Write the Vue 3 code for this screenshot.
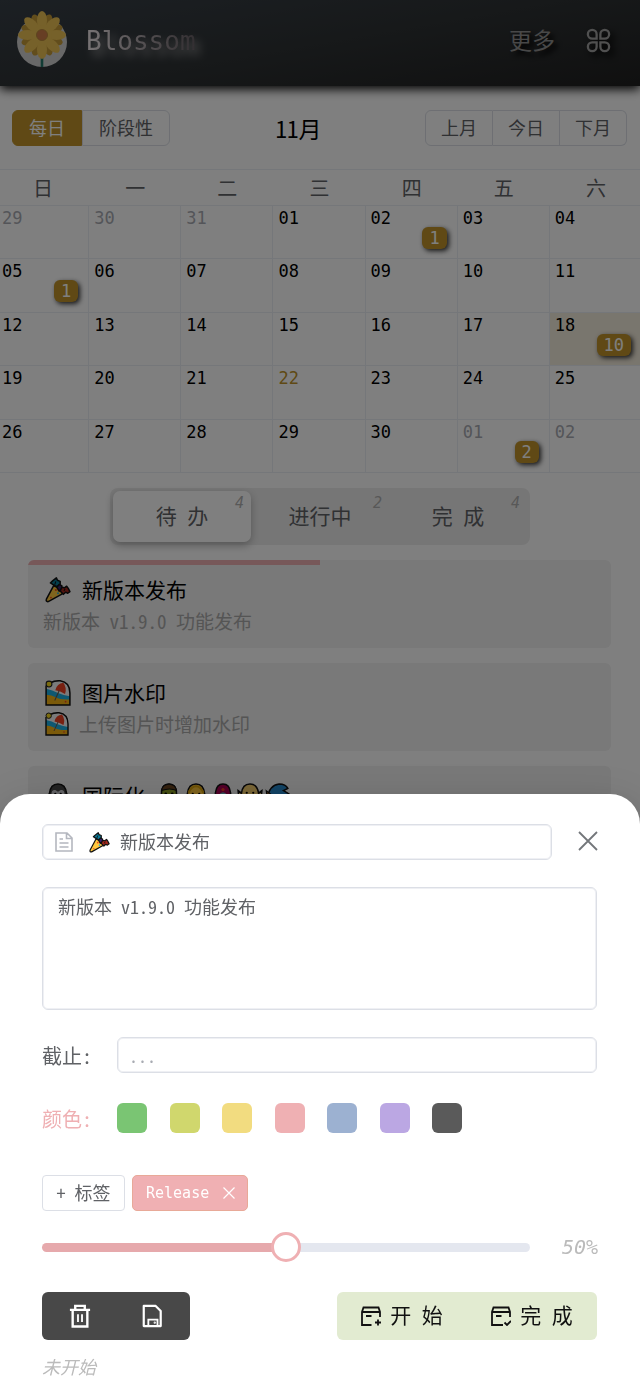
<script setup>
import { ref } from 'vue'

const mode = ref('daily')
const tab = ref('todo')
const title = ref('新版本发布')
const content = ref('新版本 v1.9.0 功能发布')
const deadline = ref('')
const progress = ref(50)

const weekdays = ['日', '一', '二', '三', '四', '五', '六']
const weeks = [
  [{ d: '29', out: true }, { d: '30', out: true }, { d: '31', out: true }, { d: '01' }, { d: '02', n: 1 }, { d: '03' }, { d: '04' }],
  [{ d: '05', n: 1 }, { d: '06' }, { d: '07' }, { d: '08' }, { d: '09' }, { d: '10' }, { d: '11' }],
  [{ d: '12' }, { d: '13' }, { d: '14' }, { d: '15' }, { d: '16' }, { d: '17' }, { d: '18', n: 10, selected: true }],
  [{ d: '19' }, { d: '20' }, { d: '21' }, { d: '22', today: true }, { d: '23' }, { d: '24' }, { d: '25' }],
  [{ d: '26' }, { d: '27' }, { d: '28' }, { d: '29' }, { d: '30' }, { d: '01', n: 2, out: true }, { d: '02', out: true }]
]
const tabs = [
  { id: 'todo', label: '待 办', count: 4 },
  { id: 'doing', label: '进行中', count: 2 },
  { id: 'done', label: '完 成', count: 4 }
]
const colors = [
  { name: '绿色', c: 'green' },
  { name: '黄绿', c: 'lime' },
  { name: '黄色', c: 'yellow' },
  { name: '粉色', c: 'pink' },
  { name: '蓝色', c: 'blue' },
  { name: '紫色', c: 'purple' },
  { name: '黑色', c: 'black' }
]
const petals = [0, 45, 90, 135, 180, 225, 270, 315]
</script>

<template>
  <svg class="defs" aria-hidden="true">
    <symbol id="party" viewBox="0 0 24 24">
      <path d="M8 8 1.300 20.500q-.8 2.500 1.700 2.200L16 15.500Q14 10 8 8Z" fill="#ffc83d" stroke="#111" stroke-width="1.400" stroke-linejoin="round" />
      <path d="M7.500 7 5 5.500 7 3.600 10.500.8 11.500 3l2.500 1v3L11 9Z" fill="#087a98" stroke="#111" stroke-width="1.400" stroke-linejoin="round" />
      <path d="M11 9.500 13 7l2.500 1v3L13 13Z" fill="#3a2370" stroke="#111" stroke-width="1.400" stroke-linejoin="round" />
      <path d="m14 13 1.500-3.500L18 10l2-1.500 1.500 2 1.500 3-2 1.500-2-1-2 2Z" fill="#a3271c" stroke="#111" stroke-width="1.400" stroke-linejoin="round" />
      <path d="m9 7 1-3M17.500 13l1-2" stroke="#111" />
      <circle cx="10" cy="12" r="1" fill="#ef4023" /><circle cx="12" cy="15" r=".9" fill="#28a9dd" /><circle cx="5.500" cy="19" r=".8" fill="#ef4023" />
    </symbol>
    <symbol id="beach" viewBox="0 0 24 24">
      <path d="M1 2h14q8 1 8 10v11H1Z" fill="#f5f7f8" />
      <path d="M1 8q6 1 11 4 5 2 11 3v5H1Z" fill="#1cb0e4" />
      <path d="M1 13.500q5 0 9 2.500t13 2v5H1Z" fill="#f7b515" />
      <path d="M9.500 9.500Q11 3 17 2.500q3.500 5 1.500 10.500Q14 10 9.500 9.500Z" fill="#ef4023" />
      <path d="m13 10-4 9" stroke="#665c50" stroke-width="1" />
      <path d="M1 5v18h22V12q0-10-9-11.300Q9 .5 5 2.500" fill="none" stroke="#111" stroke-width="1.400" />
      <circle cx="3.700" cy="3.700" r="2.700" fill="#f7d91f" stroke="#222" /><circle cx="19" cy="20" r=".8" fill="#ef4023" />
    </symbol>
    <symbol id="gorilla" viewBox="0 0 24 24">
      <path d="M4 10Q5 1 12 1t8 9l3 3v11H1V13Z" fill="#454545" stroke="#111" stroke-width="1.400" />
      <path d="M6 10q0-4 3.500-3.500L12 8l2.500-1.500Q18 6 18 10v8H6Z" fill="#c9c9cf" />
      <circle cx="9.500" cy="10" r="1" /><circle cx="14.500" cy="10" r="1" />
    </symbol>
    <symbol id="zombie" viewBox="0 0 24 24">
      <path d="M5 10Q5 1 12 1t7 9v6q-2 6-7 6t-7-6Z" fill="#8a9d24" stroke="#111" stroke-width="1.400" />
      <path d="M5 7Q6 1 12 1t7 6q-6-3-14 0Z" fill="#68431e" stroke="#111" /><circle cx="9" cy="10" r="1.200" /><circle cx="15" cy="10" r="1.200" />
    </symbol>
    <symbol id="person" viewBox="0 0 24 24">
      <path d="M4 10Q5 1 12 1t8 9v6q-3 6-8 6t-8-6Z" fill="#ffc83d" stroke="#111" stroke-width="1.400" />
      <path d="M5 9q3-6 7-6t7 6" fill="none" stroke="#dba40c" stroke-width="2" /><circle cx="9" cy="10" r="1" /><circle cx="15" cy="10" r="1" />
    </symbol>
    <symbol id="mage" viewBox="0 0 24 24">
      <path d="M5 22V9q1-8 7-8t7 8v13Z" fill="#a90052" stroke="#111" stroke-width="1.400" />
      <path d="M8 16v-5q4-5 8 0v5Z" fill="#6bb0bb" /><circle cx="12" cy="6" r="1.500" fill="#ef4023" />
    </symbol>
    <symbol id="elf" viewBox="0 0 24 24">
      <path d="M5 10 1 7q0 7 5 8m13-5 4-3q0 7-5 8" fill="#f3cf75" stroke="#111" stroke-width="1.400" />
      <path d="M4 10Q5 1 12 1t8 9q0 12-8 12T4 10Z" fill="#f5ce6e" stroke="#111" stroke-width="1.400" /><circle cx="9" cy="9" r="1" /><circle cx="15" cy="9" r="1" />
    </symbol>
    <symbol id="genie" viewBox="0 0 24 24">
      <path d="M3 14Q5 2 14 1q6 0 8 4l-4 2 5 3q0 9-9 12-8 0-11-8Z" fill="#2587c9" stroke="#111" stroke-width="1.400" />
      <path d="m2 7 4 3-3 4Z" fill="#774b23" stroke="#111" />
    </symbol>
  </svg>

  <div class="page">
    <header class="top">
      <svg class="logo" viewBox="0 0 50 58" aria-hidden="true">
        <circle cx="25" cy="31" r="25" fill="#d0d0d0" />
        <path d="M25 40v16" stroke="#24786a" stroke-width="2.600" />
        <g transform="translate(25 24)">
          <ellipse v-for="a in petals" :key="'b' + a" cx="0" cy="-14" rx="4.500" ry="8" fill="#c49a38" :transform="`rotate(${a + 22})`" />
          <ellipse v-for="a in petals" :key="a" cx="0" cy="-14.500" rx="5" ry="9.500" fill="#edc254" :transform="`rotate(${a})`" />
          <circle r="10" fill="#edc254" /><circle r="5.500" fill="#cf7c48" stroke="#b98a3c" />
        </g>
      </svg>
      <span class="brand">Blossom</span>
      <a class="more" href="#more">更多</a>
      <button class="apps" type="button" aria-label="菜单">
        <svg viewBox="0 0 24 24" fill="none" stroke="currentColor" stroke-width="2.200">
          <path d="M10.200 10.200H6A4.200 4.200 0 1 1 10.200 6ZM13.800 10.200V6A4.200 4.200 0 1 1 18 10.200ZM10.200 13.800V18A4.200 4.200 0 1 1 6 13.800ZM13.800 13.800H18A4.200 4.200 0 1 1 13.800 18Z" />
        </svg>
      </button>
    </header>

    <div class="toolbar">
      <div class="segment">
        <label :class="{ on: mode === 'daily' }"><input v-model="mode" type="radio" name="mode" value="daily" />每日</label>
        <label :class="{ on: mode === 'phase' }"><input v-model="mode" type="radio" name="mode" value="phase" />阶段性</label>
      </div>
      <h1>11月</h1>
      <div class="nav">
        <button type="button">上月</button><button type="button">今日</button><button type="button">下月</button>
      </div>
    </div>

    <div class="calendar">
      <table>
        <thead>
          <tr><th v-for="w in weekdays" :key="w" scope="col">{{ w }}</th></tr>
        </thead>
        <tbody>
          <tr v-for="(week, i) in weeks" :key="i">
            <td v-for="c in week" :key="c.d" :class="{ out: c.out, today: c.today, selected: c.selected }">
              <div class="day">{{ c.d }}<span v-if="c.n" class="badge">{{ c.n }}</span></div>
            </td>
          </tr>
        </tbody>
      </table>
    </div>

    <div class="tabs">
      <button v-for="t in tabs" :key="t.id" type="button" :class="{ active: tab === t.id }" @click="tab = t.id">
        {{ t.label }}<i>{{ t.count }}</i>
      </button>
    </div>

    <main class="cards">
      <article class="card">
        <div class="done"></div>
        <h2><svg class="emoji"><use href="#party" /></svg>新版本发布</h2>
        <p>新版本 v1.9.0 功能发布</p>
      </article>
      <article class="card">
        <h2><svg class="emoji"><use href="#beach" /></svg>图片水印</h2>
        <p><svg class="emoji small"><use href="#beach" /></svg>上传图片时增加水印</p>
      </article>
      <article class="card">
        <h2>
          <svg class="emoji"><use href="#gorilla" /></svg>国际化
          <span class="faces">
            <svg v-for="f in ['zombie', 'person', 'mage', 'elf', 'genie']" :key="f" class="emoji"><use :href="'#' + f" /></svg>
          </span>
        </h2>
      </article>
    </main>
  </div>

  <div class="overlay">
    <section class="sheet" role="dialog" aria-label="编辑任务">
      <div class="title-row">
        <label class="field">
          <svg class="doc" viewBox="0 0 20 20" fill="none" stroke="currentColor" stroke-width="1.600">
            <path d="M2 1h11l5 5v13H2ZM12.500 1v5.500H18M5.500 7h3.500M5.500 11h9M5.500 15h9" />
          </svg>
          <svg class="emoji mini"><use href="#party" /></svg>
          <input v-model="title" type="text" aria-label="标题" />
        </label>
        <button class="close" type="button" aria-label="关闭">
          <svg viewBox="0 0 20 20" stroke="currentColor" stroke-width="1.800"><path d="m1 1 18 18M19 1 1 19" /></svg>
        </button>
      </div>

      <textarea v-model="content" aria-label="内容"></textarea>

      <div class="form-row deadline">
        <label for="deadline">截止:</label>
        <input id="deadline" v-model="deadline" type="text" placeholder="..." />
      </div>

      <div class="form-row palette">
        <span>颜色:</span>
        <div class="swatches">
          <button v-for="c in colors" :key="c.c" type="button" :class="c.c" :aria-label="c.name"></button>
        </div>
      </div>

      <div class="tags">
        <button class="add" type="button">+ 标签</button>
        <span class="tag">Release
          <button type="button" aria-label="移除标签">
            <svg viewBox="0 0 12 12" stroke="currentColor" stroke-width="1.200"><path d="m.5.5 11 11M11.500.5l-11 11" /></svg>
          </button>
        </span>
      </div>

      <div class="progress">
        <input v-model="progress" type="range" min="0" max="100" aria-label="进度" :style="{ '--value': progress + '%' }" />
        <output>{{ progress }}%</output>
      </div>

      <div class="actions">
        <div class="group dark">
          <button type="button" aria-label="删除">
            <svg viewBox="0 0 24 26" fill="none" stroke="currentColor" stroke-width="2.600">
              <path d="M1 6.300h22M6.800 6V2h10.400v4M4 6v18.500h16V6" /><path d="M9.800 11v8.500M14.200 11v8.500" stroke-width="2" />
            </svg>
          </button>
          <button type="button" aria-label="保存">
            <svg viewBox="0 0 24 26" fill="none" stroke="currentColor" stroke-width="2.400">
              <path d="M3 2h13l5.500 5.500V24H3Z" stroke-linejoin="round" /><path d="M8 24v-7h10v7" stroke-width="2" /><circle cx="15" cy="20.300" r=".5" stroke-width="1.500" />
            </svg>
          </button>
        </div>
        <div class="group green-group">
          <button type="button">
            <svg viewBox="0 0 20 20" fill="none" stroke="currentColor" stroke-width="1.800">
              <path d="M19 11V6l-1.500-4.500h-15L1 6v13h9.500M1 6h18M5 10h5.500" /><path d="M17 13.500v6M14 16.500h6" />
            </svg><span>开 始</span>
          </button>
          <button type="button">
            <svg viewBox="0 0 20 20" fill="none" stroke="currentColor" stroke-width="1.800">
              <path d="M19 11V6l-1.500-4.500h-15L1 6v13h11M1 6h18M5 10h5.500" /><path d="m13.500 16.500 2.500 2.500 4-4" />
            </svg><span>完 成</span>
          </button>
        </div>
      </div>
      <p class="status">未开始</p>
    </section>
  </div>
</template>

<style>
body {
  margin: 0;
  background: #fff;
}
</style>

<style scoped>
.defs {
  position: absolute;
  width: 0;
  height: 0;
}
.page,
.overlay {
  --mono: "DejaVu Sans Mono", "Liberation Mono", "Noto Sans CJK SC", monospace;
  --cjk: "Noto Sans Mono CJK SC", "DejaVu Sans", "Noto Sans CJK SC", sans-serif;
  font-family: var(--cjk);
  font-weight: 300;
  color: #606266;
}
.page *,
.overlay * {
  box-sizing: border-box;
}
.page {
  height: 100vh;
  overflow: hidden;
  background: #fff;
}
button,
input,
textarea {
  font: inherit;
  color: inherit;
}
button {
  padding: 0;
  border: 0;
  background: none;
}
.emoji {
  width: 26px;
  height: 26px;
  flex: none;
}
.emoji.small {
  width: 24px;
  height: 24px;
  margin: 0 -2px 0 2px;
}
.emoji.mini {
  width: 21px;
  height: 21px;
}

.top {
  display: flex;
  align-items: center;
  height: 86px;
  padding: 0 29px 0 17px;
  background: linear-gradient(170deg, #384048 0%, #2e3234 50%, #202020 100%);
  box-shadow: 0 3px 10px #000;
}
.logo {
  width: 50px;
  height: 58px;
  margin-bottom: 6px;
}
.brand {
  margin: 0 auto 4px 19px;
  font: 26px/32px var(--mono);
  color: transparent;
  background: linear-gradient(90deg, #f0e8ea, #665e64);
  background-clip: text;
  filter: drop-shadow(5px 6px 4px #999);
}
.more {
  margin-bottom: 8px;
  font-size: 23px;
  color: #909090;
  text-decoration: none;
  text-shadow: 4px 4px 5px #000;
}
.apps {
  width: 25px;
  height: 25px;
  margin: 0 0 5px 31px;
  color: #a0a0a0;
  filter: drop-shadow(4px 4px 3px #000);
}
.apps svg,
.close svg,
.tag svg {
  display: block;
  width: 100%;
}

.toolbar {
  display: flex;
  justify-content: space-between;
  align-items: center;
  height: 83px;
  padding: 0 13px 0 12px;
  font-size: 18px;
}
.segment,
.nav {
  display: flex;
  height: 36px;
}
.segment label,
.nav button {
  display: flex;
  align-items: center;
  padding: 0 16px 2px;
  border: 1px solid #dcdfe6;
}
.segment label:first-child,
.nav button:first-child {
  border-radius: 6px 0 0 6px;
}
.segment label:last-child,
.nav button:last-child {
  border-radius: 0 6px 6px 0;
}
.segment input {
  position: absolute;
  opacity: 0;
}
.segment .on {
  color: #fff;
  background: #c0932a;
  border-color: #c0932a;
}
.toolbar h1 {
  margin: 0;
  padding-left: 2px;
  font-size: 23px;
  font-weight: 400;
  color: #000;
}
.nav button {
  padding: 0 15px 2px;
}
.nav button + button {
  border-left: 0;
}

.calendar {
  overflow: hidden;
}
table {
  width: calc(100% + 5px);
  margin: 0 -2px 0 -3px;
  table-layout: fixed;
  border-spacing: 0;
}
th {
  height: 37px;
  padding: 0;
  border: solid #ebeef5;
  border-width: 1px 0;
  font-size: 20px;
  line-height: 24px;
  font-weight: 300;
}
td {
  height: 53px;
  padding: 0;
  vertical-align: top;
  border: solid #ebeef5;
  border-width: 0 1px 1px 0;
  font: 17px/24px var(--mono);
  color: #000;
}
tr:nth-child(even) td {
  height: 54px;
}
.out {
  color: #a8abb2;
}
.today {
  color: #c0932a;
}
.selected {
  background: #f3ecdc;
}
.day {
  position: relative;
  height: 52px;
  padding-left: 5px;
}
.badge {
  position: absolute;
  right: 10px;
  bottom: 9px;
  padding: 0 7px;
  border-radius: 6px;
  line-height: 22px;
  color: #fff;
  background: #c0932a;
  box-shadow: 2px 2px 5px #333;
}

.tabs {
  display: flex;
  width: 420px;
  height: 57px;
  margin: 15px auto;
  padding: 3px;
  border-radius: 8px;
  background: #ededed;
}
.tabs button {
  position: relative;
  flex: 1;
  padding-bottom: 4px;
  border-radius: 7px;
  font-size: 21px;
}
.tabs .active {
  background: #fff;
  box-shadow: 0 3px 8px #aaa;
}
.tabs i {
  position: absolute;
  top: 3px;
  right: 7px;
  font: italic 15px/18px var(--mono);
  color: #b0b0b0;
}

.cards {
  display: grid;
  gap: 15px;
  padding: 0 29px 0 28px;
}
.card {
  position: relative;
  height: 88px;
  padding: 14px 15px;
  border-radius: 6px;
  background: #f2f2f2;
  overflow: hidden;
}
.done {
  position: absolute;
  inset: 0 50% auto 0;
  height: 5px;
  background: #efb0b3;
}
.card h2 {
  display: flex;
  align-items: center;
  gap: 11px;
  margin: 0;
  padding-left: 2px;
  font-size: 21px;
  line-height: 31px;
  font-weight: 400;
  color: #000;
}
.card p {
  display: flex;
  align-items: center;
  gap: 12px;
  margin: 0;
  font-size: 19px;
  line-height: 31px;
  color: #aaa;
}
.faces {
  display: flex;
  gap: 1px;
}

.overlay {
  position: fixed;
  inset: 0;
  display: flex;
  flex-direction: column;
  justify-content: flex-end;
  background: rgba(0, 0, 0, 0.5);
}
.sheet {
  padding: 30px 43px 14px 42px;
  border-radius: 30px 30px 0 0;
  background: #fff;
  box-shadow: 0 16px 48px 16px rgba(0, 0, 0, 0.08), 0 12px 32px rgba(0, 0, 0, 0.12);
  font-size: 18px;
}
.title-row,
.form-row,
.progress,
.actions {
  display: flex;
  align-items: center;
}
.field,
.deadline input,
textarea {
  border: 1px solid #dcdfe6;
  border-radius: 6px;
  background: #fff;
  box-shadow: inset 0 0 0 1px #eff0f4;
  outline: none;
}
.field {
  display: flex;
  flex: 1;
  align-items: center;
  height: 36px;
  padding: 0 11px;
}
.doc {
  width: 20px;
  height: 20px;
  margin-right: 15px;
  color: #b4b7bf;
}
.field input {
  flex: 1;
  min-width: 0;
  margin-left: 10px;
  padding: 0 0 2px;
  border: 0;
  background: none;
  outline: none;
}
.close {
  width: 20px;
  height: 20px;
  margin: 0 -1px 2px 26px;
  color: #73767a;
}
textarea {
  display: block;
  width: 100%;
  height: 123px;
  margin: 27px 0;
  padding: 5px 15px;
  line-height: 27px;
  resize: none;
}
.form-row label,
.form-row > span {
  width: 75px;
  font-size: 20px;
}
.deadline input {
  flex: 1;
  height: 36px;
  padding: 0 11px;
}
.deadline input::placeholder {
  color: #a8abb2;
}
.palette {
  height: 30px;
  margin: 30px 0 42px;
  color: #efb0b3;
}
.swatches {
  display: flex;
  justify-content: space-between;
  width: 345px;
}
.swatches button {
  width: 30px;
  height: 30px;
  border-radius: 6px;
}
.green { background: #7ac573; }
.lime { background: #d0d76d; }
.yellow { background: #f2dc80; }
.pink { background: #efb0b3; }
.blue { background: #9cb1d1; }
.purple { background: #bba7e3; }
.black { background: #5a5a5a; }

.tags {
  display: flex;
  gap: 7px;
  height: 36px;
}
.add {
  width: 83px;
  padding-bottom: 2px;
  border: 1px solid #dcdfe6;
  border-radius: 4px;
}
.tag {
  display: flex;
  align-items: center;
  gap: 14px;
  padding: 0 12px 0 13px;
  border: 1px solid #e8a998;
  border-radius: 5px;
  color: #fff;
  background: #f0b0b3;
  font: 15px/20px var(--mono);
}
.tag button {
  width: 12px;
  height: 12px;
}

.progress {
  gap: 32px;
  margin: 21px 0 30px;
}
.progress input {
  flex: 1;
  min-width: 0;
  height: 30px;
  margin: 0;
  appearance: none;
  background: none;
}
.progress input::-webkit-slider-runnable-track {
  height: 9px;
  border-radius: 5px;
  background: linear-gradient(90deg, #e6a9ac var(--value), #e4e7ef var(--value));
}
.progress input::-webkit-slider-thumb {
  appearance: none;
  width: 30px;
  height: 30px;
  margin-top: -11px;
  border: 3px solid #efb0b3;
  border-radius: 50%;
  background: #fff;
}
.progress output {
  width: 35px;
  font: italic 20px/30px var(--mono);
  white-space: nowrap;
  color: #bbb;
}

.actions {
  justify-content: space-between;
}
.group {
  display: flex;
  height: 48px;
  border-radius: 6px;
}
.dark {
  width: 148px;
  padding: 0 2px;
  color: #fff;
  background: #484848;
}
.group button {
  display: flex;
  flex: 1;
  align-items: center;
  justify-content: center;
}
.dark svg {
  width: 22px;
  height: 26px;
}
.green-group {
  width: 260px;
  color: #111;
  background: #e2ebd1;
}
.green-group button {
  gap: 9px;
  font-size: 21px;
}
.green-group span {
  padding-bottom: 4px;
}
.green-group svg {
  width: 20px;
  height: 20px;
}
.status {
  margin: 14px 0 2px;
  font-style: italic;
  line-height: 24px;
  color: #bbb;
}
</style>
